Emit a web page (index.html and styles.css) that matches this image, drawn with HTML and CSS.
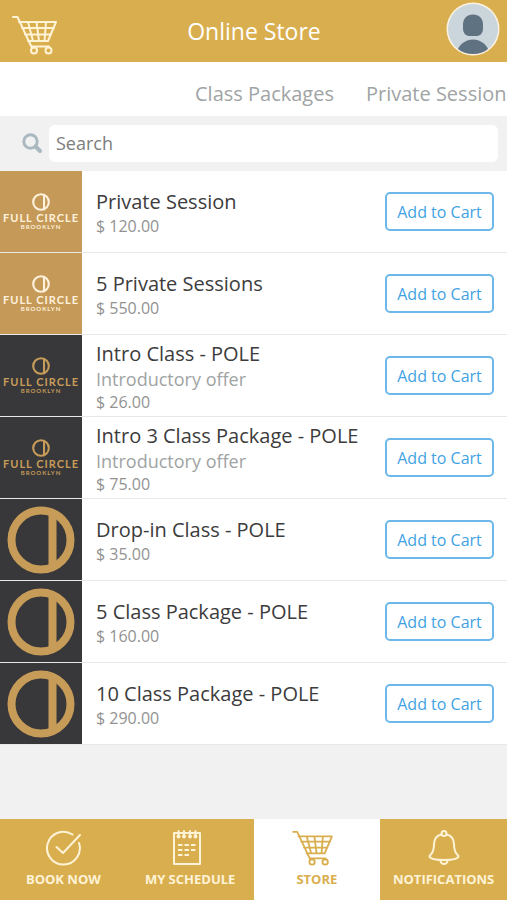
FILE: index.html
```html
<!DOCTYPE html>
<html lang="en">
<head>
<meta charset="utf-8">
<meta name="viewport" content="width=device-width, initial-scale=1">
<title>Online Store</title>
<link rel="stylesheet" href="styles.css">
</head>
<body>
<svg class="defs" aria-hidden="true">
  <symbol id="cart" viewBox="0 0 46 40">
    <path d="M1 2h4.500L20 33M7 7h37l-8 19H16M10 13h32M13 19.500h26M16 7l5 19M24.500 7l2.500 19M34 7l-1.500 19M20 31.500h17"/>
    <circle cx="22" cy="35.500" r="3"/><circle cx="36.500" cy="35.500" r="3"/>
  </symbol>
  <symbol id="mark" viewBox="0 0 68 68">
    <circle cx="34" cy="34" r="29.500"/><path d="M45.500 7v54"/>
  </symbol>
</svg>

<header class="topbar">
  <a class="topbar-cart" href="#cart-page" aria-label="Cart"><svg class="icon-cart"><use href="#cart"/></svg></a>
  <h1 class="topbar-title">Online Store</h1>
  <a class="avatar" href="#profile" aria-label="Profile">
    <svg viewBox="0 0 54 54">
      <circle cx="27" cy="27" r="26.500" fill="#fbf3e0"/>
      <circle cx="27" cy="27" r="25" fill="#cbd5dc"/>
      <path d="M27 12.500c6 0 10 4 10 10v4c0 5-3 7.500-7 7.500h-6c-4 0-7-2.500-7-7.500v-4c0-6 4-10 10-10z" fill="#5f7282"/>
      <path d="M12 47c2-5 8-9.500 15-9.500s13 4.500 15 9.500c-4 3.500-9 5-15 5s-11-1.500-15-5z" fill="#5f7282"/>
    </svg>
  </a>
</header>

<nav class="categories" aria-label="Categories">
  <a href="#class-packages">Class Packages</a>
  <a href="#private-session">Private Session</a>
</nav>

<form class="search" role="search">
  <label for="q" aria-label="Search"><svg class="icon-search" viewBox="0 0 22 22"><circle cx="9.500" cy="8.500" r="6.700"/><path class="handle" d="M14.500 13.500l4.500 4.500"/></svg></label>
  <input id="q" type="search" placeholder="Search">
</form>

<main>
  <ul class="products">
    <li class="product">
      <div class="thumb tan"><svg class="mark-small"><use href="#mark"/></svg><span class="brand">FULL CIRCLE</span><span class="city">BROOKLYN</span></div>
      <div class="info"><h2>Private Session</h2><p class="price">$ 120.00</p></div>
      <button type="button">Add to Cart</button>
    </li>
    <li class="product">
      <div class="thumb tan"><svg class="mark-small"><use href="#mark"/></svg><span class="brand">FULL CIRCLE</span><span class="city">BROOKLYN</span></div>
      <div class="info"><h2>5 Private Sessions</h2><p class="price">$ 550.00</p></div>
      <button type="button">Add to Cart</button>
    </li>
    <li class="product">
      <div class="thumb dark"><svg class="mark-small"><use href="#mark"/></svg><span class="brand">FULL CIRCLE</span><span class="city">BROOKLYN</span></div>
      <div class="info"><h2>Intro Class - POLE</h2><p class="offer">Introductory offer</p><p class="price">$ 26.00</p></div>
      <button type="button">Add to Cart</button>
    </li>
    <li class="product">
      <div class="thumb dark"><svg class="mark-small"><use href="#mark"/></svg><span class="brand">FULL CIRCLE</span><span class="city">BROOKLYN</span></div>
      <div class="info"><h2>Intro 3 Class Package - POLE</h2><p class="offer">Introductory offer</p><p class="price">$ 75.00</p></div>
      <button type="button">Add to Cart</button>
    </li>
    <li class="product">
      <div class="thumb dark"><svg class="mark-large"><use href="#mark"/></svg></div>
      <div class="info"><h2>Drop-in Class - POLE</h2><p class="price">$ 35.00</p></div>
      <button type="button">Add to Cart</button>
    </li>
    <li class="product">
      <div class="thumb dark"><svg class="mark-large"><use href="#mark"/></svg></div>
      <div class="info"><h2>5 Class Package - POLE</h2><p class="price">$ 160.00</p></div>
      <button type="button">Add to Cart</button>
    </li>
    <li class="product">
      <div class="thumb dark"><svg class="mark-large"><use href="#mark"/></svg></div>
      <div class="info"><h2>10 Class Package - POLE</h2><p class="price">$ 290.00</p></div>
      <button type="button">Add to Cart</button>
    </li>
  </ul>
</main>

<nav class="tabbar" aria-label="Main">
  <a href="#book">
    <svg class="icon-tab" viewBox="0 0 42 36"><path d="M30.500 4.500A16.400 16.400 0 1 0 37 13M14.500 17l6.500 6L38 5"/></svg>
    <span>BOOK NOW</span>
  </a>
  <a href="#schedule">
    <svg class="icon-tab" viewBox="0 0 42 36"><path d="M5 3h26v31H5zM9.500 1v5M15 1v5M21 1v5M26.500 1v5"/><path class="dash" d="M9 15h4.500M15.500 15h4.500M22 15h4.500M9 20h4.500M15.500 20h4.500M22 20h4.500M9 25h4.500M15.500 25h4.500"/><g class="dots"><circle cx="9.500" cy="6.500" r="2"/><circle cx="15" cy="6.500" r="2"/><circle cx="21" cy="6.500" r="2"/><circle cx="26.500" cy="6.500" r="2"/></g></svg>
    <span>MY SCHEDULE</span>
  </a>
  <a class="active" href="#store" aria-current="page">
    <svg class="icon-tab store"><use href="#cart"/></svg>
    <span>STORE</span>
  </a>
  <a href="#notifications">
    <svg class="icon-tab" viewBox="0 0 42 36"><path d="M18.500 4.500c-5 1-7.500 5-7.500 10 0 6-1 8.500-4.500 11.500 0 3 6 4 14.500 4S35.500 29 35.500 26c-3.500-3-4.500-5.500-4.500-11.500 0-5-2.500-9-7.500-10"/><circle cx="21" cy="3.500" r="2.500"/><path d="M17.500 30.500a3.500 3.500 0 1 0 7 0"/></svg>
    <span>NOTIFICATIONS</span>
  </a>
</nav>
</body>
</html>
```
FILE: styles.css
```css
* { box-sizing: border-box; }
body {
  margin: 0;
  min-height: 100vh;
  display: flex;
  flex-direction: column;
  background: #f1f1f1;
  color: #3c3c3c;
  font-family: "Open Sans", sans-serif;
}
h1, h2, p, ul { margin: 0; padding: 0; font-weight: 400; }
a { color: inherit; text-decoration: none; }
svg { display: block; fill: none; stroke: currentColor; stroke-width: 2; stroke-linecap: round; stroke-linejoin: round; }
.defs { position: absolute; width: 0; height: 0; }

.topbar {
  display: grid;
  grid-template-columns: 54px 1fr 54px;
  align-items: center;
  height: 62px;
  padding: 0 7px 4px 12px;
  background: #d9ae4f;
  color: #fff;
}
.topbar-cart { padding-top: 12px; color: #fff3d6; }
.icon-cart { width: 46px; height: 40px; }
.topbar-title { padding: 4px 4px 0 0; text-align: center; font-size: 23px; line-height: 32px; }
.avatar svg { width: 54px; height: 54px; stroke: none; }

.categories {
  display: flex;
  gap: 32px;
  height: 54px;
  padding: 16px 0 0 195px;
  overflow: hidden;
  background: #fff;
  color: #9fa4a4;
  font-size: 20px;
  line-height: 32px;
  white-space: nowrap;
}

.search { display: flex; align-items: center; gap: 6px; height: 55px; padding: 0 9px 0 21px; }
.icon-search { width: 22px; height: 22px; color: #aab9c0; stroke-width: 3; }
.handle { stroke-width: 4; }
.search input {
  flex: 1;
  min-width: 0;
  height: 37px;
  padding: 0 7px 2px;
  border: 0;
  border-radius: 6px;
  background: #fff;
  color: #555;
  font: 18px/24px "Open Sans", sans-serif;
  appearance: none;
}
.search input::placeholder { color: #7d7d7d; opacity: 1; }

main { flex: 1; }
.products { list-style: none; }
.product {
  display: flex;
  align-items: center;
  height: 82px;
  padding-right: 13px;
  border-bottom: 1px solid #e8e8e8;
  background: #fff;
}
.thumb {
  display: flex;
  flex-direction: column;
  align-items: center;
  justify-content: center;
  width: 82px;
  height: 81px;
  flex: none;
  text-align: center;
  font-family: Lato, sans-serif;
  font-weight: 700;
}
.tan { background: #c59a58; color: #fff1dc; }
.dark { background: #38383a; color: #c79c59; }
.mark-small { width: 18px; height: 18px; stroke-width: 8; }
.mark-large { width: 68px; height: 68px; stroke-width: 8; stroke-linecap: butt; }
.brand { font-size: 11px; line-height: 13px; letter-spacing: 1px; white-space: nowrap; }
.city { font-size: 6px; line-height: 6px; letter-spacing: 1px; }
.info { flex: 1; min-width: 0; padding: 2px 0 0 14px; }
.info h2 { font-size: 20px; line-height: 26px; white-space: nowrap; }
.price { color: #929292; font-size: 16px; line-height: 22px; }
.offer { color: #9fa4a4; font-size: 18px; line-height: 24px; }
.product button {
  flex: none;
  width: 109px;
  height: 39px;
  padding: 0;
  border: 2px solid #6cb8ea;
  border-radius: 5px;
  background: #fff;
  color: #3fa2e3;
  font: 16px/24px "Open Sans", sans-serif;
}

.tabbar { display: grid; grid-template-columns: repeat(4, 1fr); height: 81px; background: #d9ae4f; }
.tabbar a {
  display: flex;
  flex-direction: column;
  align-items: center;
  gap: 4px;
  padding-top: 11px;
  color: #fff3d6;
  font-size: 13px;
  font-weight: 700;
  line-height: 18px;
}
.tabbar .active { background: #fff; color: #d9ae4f; }
.icon-tab { width: 42px; height: 36px; }
.store { width: 50px; padding-right: 8px; }
.dash { stroke-linecap: butt; }
.dots { fill: currentColor; stroke: none; }
```
